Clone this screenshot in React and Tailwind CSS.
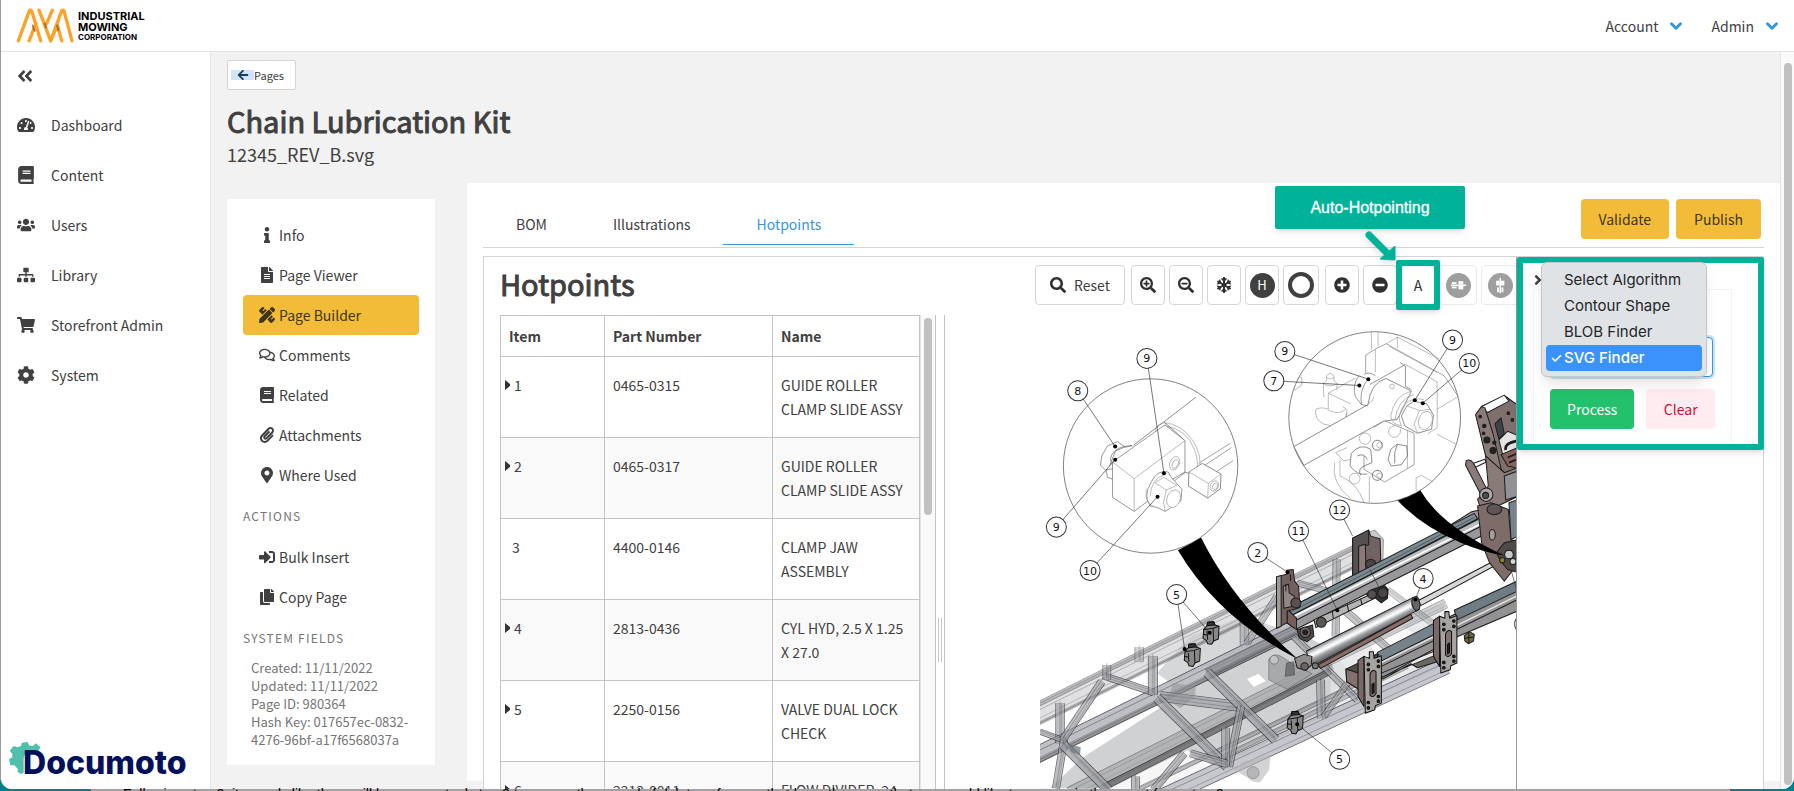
import React, { useState } from "react";
import {
  FaAngleDoubleLeft,
  FaAngleDoubleRight,
  FaArrowLeft,
  FaBook,
  FaCog,
  FaCopy,
  FaFileAlt,
  FaInfo,
  FaMapMarkerAlt,
  FaMinusCircle,
  FaPaperclip,
  FaPencilRuler,
  FaPlusCircle,
  FaRegComments,
  FaSearch,
  FaSearchMinus,
  FaSearchPlus,
  FaShoppingCart,
  FaSignInAlt,
  FaSitemap,
  FaSnowflake,
  FaTachometerAlt,
  FaUsers,
} from "react-icons/fa";
import { ChevronDown } from "lucide-react";

const navItems = [
  { label: "Dashboard", icon: FaTachometerAlt },
  { label: "Content", icon: FaBook },
  { label: "Users", icon: FaUsers },
  { label: "Library", icon: FaSitemap },
  { label: "Storefront Admin", icon: FaShoppingCart },
  { label: "System", icon: FaCog },
];

const pageLinks = [
  { label: "Info", icon: FaInfo },
  { label: "Page Viewer", icon: FaFileAlt },
  { label: "Page Builder", icon: FaPencilRuler, active: true },
  { label: "Comments", icon: FaRegComments },
  { label: "Related", icon: FaBook },
  { label: "Attachments", icon: FaPaperclip },
  { label: "Where Used", icon: FaMapMarkerAlt },
];

const actionLinks = [
  { label: "Bulk Insert", icon: FaSignInAlt },
  { label: "Copy Page", icon: FaCopy },
];

const parts = [
  { item: "1", number: "0465-0315", name: "GUIDE ROLLER CLAMP SLIDE ASSY", expandable: true },
  { item: "2", number: "0465-0317", name: "GUIDE ROLLER CLAMP SLIDE ASSY", expandable: true },
  { item: "3", number: "4400-0146", name: "CLAMP JAW ASSEMBLY", expandable: false },
  { item: "4", number: "2813-0436", name: "CYL HYD, 2.5 X 1.25 X 27.0", expandable: true },
  { item: "5", number: "2250-0156", name: "VALVE DUAL LOCK CHECK", expandable: true },
  { item: "6", number: "2212-0011", name: "FLOW DIVIDER, 24 GPM", expandable: true },
];

const algorithms = ["Select Algorithm", "Contour Shape", "BLOB Finder", "SVG Finder"];

const CompanyLogo = () => (
  <a href="#home" className="flex items-center gap-1 text-black">
    <svg viewBox="0 0 174 104" className="h-[35px] w-[58px]" fill="none" strokeWidth="10" strokeLinecap="round" strokeLinejoin="round">
      <g stroke="#fda32b">
        <path d="M7 98 L40 8 Q43 4 47 8 L74 98" />
        <path d="M39 98 L60 46" />
        <path d="M69 6 L104 98 L137 8 Q140 4 144 8 L168 98" />
        <path d="M109 6 L92 46" />
        <path d="M104 98 L124 50 L137 98" />
      </g>
      <g stroke="#8a5a1c" strokeWidth="6" opacity="0.7">
        <path d="M50 52 L56 68" />
        <path d="M86 46 L90 58" />
        <path d="M123 52 L127 66" />
      </g>
    </svg>
    <span className="flex flex-col font-['Inter',sans-serif] font-bold">
      <span className="text-[11px] leading-[11px]">INDUSTRIAL</span>
      <span className="text-[11px] leading-[11px]">MOWING</span>
      <span className="text-[8px] leading-[8px]">CORPORATION</span>
    </span>
  </a>
);

const DocumotoLogo = () => (
  <div className="absolute bottom-2 left-2 flex items-end">
    <svg viewBox="0 0 96 100" className="absolute -top-1 left-0 h-[34px] w-8">
      <path
        d="M38 4 L56 2 L60 12 L72 14 L80 6 L94 18 L88 30 L92 38 L48 38 L44 50 L44 94 L36 98 L26 92 L26 82 L16 72 L4 72 L0 54 L10 48 L10 38 L2 28 L14 14 L26 18 L36 14 Z"
        fill="#4fc1ab"
      />
    </svg>
    <span className="relative pl-[14px] font-['Inter',sans-serif] text-[32px] leading-9 font-extrabold text-[#03105a]">Documoto</span>
  </div>
);

const MenuLink = ({ label, icon: Icon, active }) => (
  <a
    href="#page"
    className={`flex h-10 items-center gap-1 rounded px-4 ${active ? "bg-[#f3bc38] text-[#3e3520]" : "text-[#404040]"}`}
  >
    <span className="flex w-4 justify-center">
      <Icon size={16} className="shrink-0" />
    </span>
    {label}
  </a>
);

const ToolButton = ({ label, wide, faded, children }) => (
  <button
    aria-label={label}
    className={`flex h-10 shrink-0 items-center justify-center rounded border border-[#d6d6d6] bg-white text-[#2f2f2f] ${wide ? "w-9" : faded ? "w-[38px]" : "w-[34px]"} ${faded ? "opacity-50" : ""}`}
  >
    {children}
  </button>
);

const Balloon = ({ x, y, n }) => (
  <g>
    <circle cx={x} cy={y} r="30" fill="#fff" stroke="#333" strokeWidth="3" />
    <text x={x} y={y + 12} textAnchor="middle" fontSize="33" fill="#111" fontFamily="'DejaVu Sans', sans-serif">
      {n}
    </text>
  </g>
);

const Leader = ({ from, to, dot = true }) => (
  <g>
    <line x1={from[0]} y1={from[1]} x2={to[0]} y2={to[1]} stroke="#333" strokeWidth="2" />
    {dot && <circle cx={to[0]} cy={to[1]} r="6" fill="#000" />}
  </g>
);

// A square tube: dark outline with a lighter core and two inner edge lines
const Tube = ({ a, b, w, fill = "#a3a4aa", opacity = 0.6 }) => (
  <g opacity={opacity}>
    <line x1={a[0]} y1={a[1]} x2={b[0]} y2={b[1]} stroke="#222224" strokeWidth={w} />
    <line x1={a[0]} y1={a[1]} x2={b[0]} y2={b[1]} stroke={fill} strokeWidth={w - 4} />
    <line x1={a[0]} y1={a[1] - w / 5} x2={b[0]} y2={b[1] - w / 5} stroke="#4c4c50" strokeWidth="2" />
    <line x1={a[0] + w / 6} y1={a[1] + w / 6} x2={b[0] + w / 6} y2={b[1] + w / 6} stroke="#66666a" strokeWidth="2" />
  </g>
);

const Valve = ({ x, y }) => (
  <g transform={`translate(${x} ${y})`} stroke="#111" strokeWidth="3" strokeLinejoin="round">
    <path d="M-22 -10 L-12 -22 L-10 -32 L8 -34 L12 -24 L24 -20 L22 18 L8 24 L2 34 L-10 32 L-14 22 L-24 16 Z" fill="#888" />
    <path d="M-22 -10 L6 -14 L8 24 M6 -14 L24 -20 M-24 4 L-12 6 M-12 -6 L-10 20" fill="none" />
    <path d="M-10 -32 L8 -34 L12 -24 L-12 -22 Z" fill="#333" />
  </g>
);

const Bracket = ({ x, y }) => (
  <g transform={`translate(${x} ${y})`} stroke="#111" strokeWidth="3" strokeLinejoin="round">
    <path d="M-18 12 L0 0 L0 150 L-18 120 Z" fill="#786866" />
    <path d="M0 0 L16 6 L16 -14 L28 -14 L30 6 L52 -2 L52 140 L34 148 L32 160 L4 170 Z" fill="#a7a3a1" />
    <path d="M18 52 Q26 36 36 46 L36 112 Q26 126 18 116 Z" fill="#817472" />
    <path d="M24 84 L30 80 L30 108 L24 112 Z" fill="#222" />
    <g fill="#222">
      <circle cx="13" cy="24" r="4" />
      <circle cx="43" cy="14" r="4" />
      <circle cx="13" cy="40" r="4" />
      <circle cx="43" cy="30" r="4" />
      <circle cx="13" cy="138" r="4" />
      <circle cx="43" cy="120" r="4" />
      <circle cx="13" cy="154" r="4" />
      <circle cx="43" cy="134" r="4" />
    </g>
  </g>
);

const LeftDetail = () => (
  <g fill="none" stroke="#9a9a9a" strokeWidth="2" strokeLinejoin="round">
    <circle cx="361" cy="470" r="261" fill="#fff" stroke="#444" />
    <path d="M310 408 L497 264" stroke="#555" />
    <path d="M505 462 L600 402 M520 470 L603 415 M560 486 L608 454" stroke="#777" />
    <path d="M375 370 Q374 345 402 340 Q455 345 488 395 Q518 440 506 490 L478 492" />
    <path d="M405 350 Q470 360 492 420 Q508 460 497 492" />
    <path d="M402 340 Q420 352 464 395" stroke="#555" />
    {/* rear nut */}
    <path d="M262 397 L232 410 L215 440 L211 468 L226 482 L250 478 M262 397 L286 414 L306 408 M286 412 L256 425 L238 470" stroke="#666" />
    <path d="M228 482 L232 504 L248 510 M250 470 Q230 450 254 425 Q275 408 306 410" stroke="#666" />
    {/* block */}
    <path d="M247 458 L404 347 L464 394 L464 490 L312 606 L247 564 Z" fill="#fff" stroke="#666" />
    <path d="M247 458 L312 508 L464 394 M312 508 L312 606" />
    <ellipse cx="433" cy="462" rx="14" ry="21" transform="rotate(25 433 462)" />
    <ellipse cx="435" cy="464" rx="8" ry="14" transform="rotate(25 435 464)" />
    {/* front nut */}
    <path d="M362 520 Q380 480 414 488 L420 500 L455 540 L452 574 L405 606 L380 594 L360 590 Q338 560 362 520 Z" fill="#fff" stroke="#666" />
    <path d="M360 560 Q362 510 402 496 M374 520 L400 504 L440 528 L408 542 L374 520 M408 542 L400 578 L405 606 M348 540 Q344 580 368 590" />
    <ellipse cx="430" cy="568" rx="20" ry="27" transform="rotate(20 430 568)" fill="#fff" />
    <path d="M426 510 L464 488 L476 492" stroke="#666" />
    {/* fitting */}
    <path d="M516 462 L572 494 L570 538 L532 566 L474 530 L476 488 Z" fill="#fff" stroke="#555" />
    <path d="M476 488 L534 522 L572 494 M534 522 L532 566" />
    <ellipse cx="552" cy="530" rx="12" ry="16" transform="rotate(20 552 530)" />
    <ellipse cx="554" cy="531" rx="7" ry="10" transform="rotate(20 554 531)" />
  </g>
);

const RightDetail = () => (
  <g fill="none" stroke="#9a9a9a" strokeWidth="2" strokeLinejoin="round">
    <circle cx="1032" cy="325" r="257" fill="#fff" stroke="#444" />
    <path d="M1022 68 V122 M1042 68 V112 M1100 84 L1100 118 M1100 84 L1066 104 M1100 84 L1226 150" />
    {/* plates */}
    <path d="M1005 192 V138 L1034 120 L1066 104 L1240 200 L1282 262" stroke="#777" />
    <path d="M1034 120 V190 M1124 166 L1219 218 V356 L1190 374 M1219 300 L1282 262 M1219 375 L1276 405 M1076 112 L1219 190" />
    <path d="M1124 166 L1018 226 M1108 160 L1124 172 V232 L1140 240" stroke="#666" />
    {/* spigot */}
    <path d="M880 264 L878 224 L888 214 L888 200 Q898 186 910 200 L910 214 L920 224 L918 242 M878 224 Q898 236 920 224 M888 206 Q900 212 910 206" />
    <path d="M893 300 V252 L975 206 M893 252 L960 284 M800 210 Q820 190 812 230 L790 244" />
    <path d="M856 300 Q850 330 880 345 L905 350 M856 300 Q880 290 900 305 Q925 318 945 300 M905 350 Q950 345 948 310 M936 292 Q956 300 946 322" />
    {/* manifold */}
    <path d="M1030 355 L1060 334 L1150 372 V466 L1062 518 L1000 480 V440" stroke="#777" />
    <path d="M1130 364 V476 M1092 350 Q1070 352 1074 372 Q1084 390 1100 382 Q1112 372 1110 358" />
    <path d="M1100 405 L1128 410 L1130 440 L1112 466 L1082 470 L1072 452 L1080 420 Z M1100 405 L1092 430 L1092 462" stroke="#555" />
    <circle cx="1040" cy="408" r="15" stroke="#444" />
    <circle cx="1046" cy="408" r="8" />
    <circle cx="1040" cy="498" r="15" stroke="#444" />
    <circle cx="1046" cy="499" r="8" />
    <circle cx="1003" cy="388" r="17" />
    <path d="M962 432 Q990 400 1020 420 L1024 460 L1000 470 Q980 480 990 498 M962 432 L958 470 Q980 500 1010 494 M980 440 Q1000 430 1010 450" stroke="#555" />
    <circle cx="972" cy="508" r="16" />
    <path d="M950 415 L915 430 L940 455 L960 450 M928 450 V500 Q980 520 1000 580 M912 460 Q900 520 960 568 M1016 500 V578 M1156 545 V505 L1172 498 L1206 518" />
    {/* link arm */}
    <path d="M790 412 L1012 286 Q1020 220 1066 208 L1142 246 L1100 330 L1058 336 L820 468 Z" fill="#fff" stroke="#555" />
    <path d="M1012 286 Q1028 276 1030 262" />
    <circle cx="1084" cy="232" r="7" />
    <path d="M985 200 Q964 226 974 262 L992 286 Q986 240 1012 210 M1000 196 Q1016 186 1034 200 M992 286 L1012 290" stroke="#666" />
    {/* front nut */}
    <path d="M1142 246 Q1090 258 1080 320 Q1082 345 1112 350 M1150 256 Q1100 270 1092 335" />
    <path d="M1128 290 L1150 276 L1188 284 L1208 318 L1202 360 L1160 372 L1122 350 L1112 320 Z" fill="#fff" stroke="#555" />
    <path d="M1128 290 L1166 304 L1150 345 L1160 372 M1166 304 L1198 300 M1112 350 Q1096 320 1122 284 Q1150 262 1180 272" />
    <ellipse cx="1184" cy="334" rx="20" ry="28" transform="rotate(18 1184 334)" fill="#fff" />
  </g>
);

// Semi-transparent truss behind the coloured parts
const Frame = () => (
  <g strokeLinejoin="round">
    <path d="M30 745 L100 690 L520 420 L780 262 L900 330 L960 400 L900 520 L420 745 Z" fill="#cbccce" opacity="0.9" />
    <path d="M900 330 L1240 190 L1240 380 L900 530 Z" fill="#e4e5e7" opacity="0.8" />
    <path d="M1000 300 L1100 250 L1160 290 L1050 350 Z" fill="#fff" opacity="0.7" />
    <path d="M30 680 L330 520 L376 486 L150 660 L60 745 L30 745 Z" fill="#fff" />
    <path d="M240 745 L470 630 L570 690 L430 745 Z" fill="#fff" opacity="0.8" />
    <path d="M380 400 L480 290 L640 230 L760 270 L420 430 Z" fill="#d6d7d9" />
    <Tube a={[10, 530]} b={[1010, 34]} w={56} fill="#cbccd0" opacity={0.6} />
    <Tube a={[10, 500]} b={[1010, 4]} w={16} opacity={0.5} />
    <Tube a={[10, 560]} b={[1010, 64]} w={10} fill="#8e8f93" opacity={0.4} />
    <Tube a={[10, 650]} b={[800, 262]} w={50} fill="#b4b5bd" opacity={0.85} />
    <Tube a={[10, 672]} b={[800, 284]} w={12} fill="#7a7b80" opacity={0.55} />
    <Tube a={[530, 402]} b={[800, 268]} w={28} fill="#77787b" opacity={0.5} />
    <Tube a={[120, 760]} b={[900, 370]} w={40} fill="#96979a" opacity={0.5} />
    <Tube a={[215, 745]} b={[900, 394]} w={20} fill="#67686b" opacity={0.8} />
    <Tube a={[400, 770]} b={[1246, 378]} w={52} fill="#b9bac2" opacity={0.8} />
    <Tube a={[330, 745]} b={[1130, 360]} w={14} opacity={0.6} />
    <Tube a={[560, 660]} b={[1130, 380]} w={14} opacity={0.5} />
    <Tube a={[1245, 192]} b={[880, 370]} w={30} opacity={0.45} />
    <Tube a={[90, 490]} b={[90, 610]} w={28} opacity={0.7} />
    <Tube a={[30, 575]} b={[110, 605]} w={18} opacity={0.7} />
    <Tube a={[102, 600]} b={[78, 745]} w={24} opacity={0.7} />
    <Tube a={[98, 600]} b={[215, 425]} w={24} opacity={0.7} />
    <Tube a={[100, 615]} b={[235, 750]} w={30} opacity={0.8} />
    <Tube a={[220, 408]} b={[370, 458]} w={22} opacity={0.7} />
    <Tube a={[230, 376]} b={[230, 420]} w={26} />
    <Tube a={[368, 350]} b={[368, 465]} w={30} opacity={0.7} />
    <Tube a={[327, 322]} b={[327, 366]} w={28} opacity={0.5} />
    <Tube a={[390, 470]} b={[630, 500]} w={32} opacity={0.75} />
    <Tube a={[380, 474]} b={[590, 680]} w={30} opacity={0.8} />
    <Tube a={[530, 398]} b={[735, 600]} w={30} opacity={0.8} />
    <Tube a={[632, 500]} b={[596, 680]} w={24} opacity={0.75} />
    <Tube a={[586, 565]} b={[586, 680]} w={26} opacity={0.7} />
    <Tube a={[480, 640]} b={[590, 672]} w={24} opacity={0.7} />
    <Tube a={[462, 640]} b={[370, 750]} w={24} opacity={0.7} />
    <Tube a={[316, 710]} b={[316, 750]} w={26} opacity={0.7} />
    <Tube a={[642, 235]} b={[642, 315]} w={28} opacity={0.6} />
    <Tube a={[740, 170]} b={[650, 310]} w={22} opacity={0.6} />
    <Tube a={[918, 60]} b={[915, 290]} w={24} opacity={0.6} />
    <Tube a={[800, 130]} b={[950, 170]} w={20} opacity={0.6} />
    <Tube a={[940, 210]} b={[1110, 360]} w={24} opacity={0.6} />
    <Tube a={[1070, 150]} b={[1230, 270]} w={20} opacity={0.4} />
    <Tube a={[790, 290]} b={[980, 480]} w={22} opacity={0.7} />
    <Tube a={[870, 420]} b={[872, 535]} w={26} opacity={0.7} />
    <Tube a={[950, 430]} b={[880, 530]} w={20} opacity={0.6} />
    <path d="M715 400 V358 Q732 338 752 350 L790 375 L845 402 L770 448 L715 420 Z" fill="#9fa0a2" stroke="#555" strokeWidth="2" opacity="0.8" />
    <circle cx="731" cy="360" r="13" fill="#c3c4c6" stroke="#666" strokeWidth="2" />
    <path d="M768 370 L790 366 L792 405 L764 410 Z" fill="#6a6b6d" stroke="#444" strokeWidth="2" opacity="0.85" />
    <path d="M610 690 L640 665 L720 645 L716 690 L690 725 Q670 732 650 712 Z" fill="#b5b6b9" opacity="0.6" />
    <circle cx="668" cy="698" r="18" fill="#a9aaad" stroke="#666" strokeWidth="2" opacity="0.7" />
    <path d="M430 430 L496 440 L494 470 L450 505 L410 480 Z" fill="#8c8d90" opacity="0.5" />
    <path d="M112 610 L152 622 L150 646 L124 636 Z" fill="#67757b" opacity="0.7" />
    <path d="M650 418 L684 402 L706 424 L670 442 Z" fill="#fff" />
  </g>
);

const Assembly = () => (
  <g stroke="#1c1c1c" strokeWidth="3" strokeLinejoin="round">
    {/* rear bracket */}
    <path d="M1010 -20 L1032 -28 L1058 0 L1056 80 L1010 90 Z" fill="#c9cacc" stroke="#999" />
    <path d="M966 -4 L1014 -28 L1020 -10 L1048 -2 L1050 60 L1034 96 L966 120 Z" fill="#716361" />
    <path d="M966 -4 L1014 -28 L1014 16 L984 22 L984 112 L966 120 Z" fill="#555052" />
    <path d="M984 20 L1004 14 L1006 100 L984 110 Z" fill="#8b7a77" />
    <circle cx="1020" cy="74" r="15" fill="#4a4546" />
    {/* upper slide rail */}
    <path d="M770 208 L1190 0 L1320 -82 L1360 -92 L1390 -70 L1390 -30 L798 268 L770 250 Z" fill="#98989a" />
    <path d="M770 208 L1330 -78 L1340 -62 L786 226 Z" fill="#7c8a92" />
    <path d="M786 226 L1345 -62 L1385 -80 L1390 -60 L796 242 Z" fill="#b8bcc0" />
    <path d="M786 232 L1388 -66" stroke="#fff" strokeWidth="5" />
    <path d="M774 220 L1330 -66" stroke="#3b4348" strokeWidth="2" />
    <path d="M770 208 L798 236 L798 270 L770 250 Z" fill="#765f5b" />
    {/* roller strip */}
    <path d="M850 240 L1030 160 L1032 176 L856 264 Z" fill="#b6b4b3" />
    <path d="M905 214 L908 236 M950 196 L954 216 M990 178 L994 196" />
    <path d="M1008 166 L1024 150 L1062 138 L1072 150 L1070 176 L1052 190 L1032 174 Z" fill="#333" />
    <circle cx="1024" cy="164" r="13" fill="#55504f" />
    <circle cx="1056" cy="160" r="15" fill="#4b4544" />
    <path d="M800 270 L846 256 L850 290 L830 306 L806 296 Z" fill="#4f4a4a" />
    <circle cx="872" cy="248" r="15" fill="#5a5453" />
    <circle cx="824" cy="278" r="16" fill="#6b6463" />
    <circle cx="824" cy="278" r="7" fill="#222" />
    {/* front left bracket */}
    <path d="M738 112 L768 104 L768 92 L788 90 L792 124 L804 140 L808 204 L770 214 L770 248 L738 266 Z" fill="#71605d" />
    <path d="M738 112 L752 108 L752 260 L738 266 Z" fill="#a09a98" />
    <path d="M758 140 L774 134 L776 160 L792 170 L788 200 L760 206 Z" fill="#918683" />
    <circle cx="796" cy="190" r="15" fill="#5b504e" />
    <path d="M766 134 V156 M780 104 V124" />
    {/* hydraulic cylinder */}
    <path d="M862 376 L1140 224 L1146 236 L870 386 Z" fill="#8a6c66" />
    <path d="M828 334 L1146 174 Q1168 182 1164 210 L850 378 Q832 362 828 334 Z" fill="url(#steel)" />
    <path d="M1146 174 Q1136 196 1156 214 L1166 208 Q1172 186 1158 170 Z" fill="#666" />
    <path d="M1164 182 L1420 48 L1426 60 L1170 198 Z" fill="#d4d6d8" />
    <path d="M792 356 L820 344 L844 350 L842 376 L826 392 L800 384 Z" fill="#8f8b8a" />
    <circle cx="822" cy="380" r="11" fill="#6a6463" />
    <circle cx="854" cy="378" r="9" fill="#777" />
    {/* lower slide rail */}
    <path d="M1040 345 L1220 250 L1462 127 L1462 213 L1270 295 L1052 415 Z" fill="#929294" />
    <path d="M1270 212 L1462 123 L1462 153 L1280 240 Z" fill="#6f7c83" />
    <path d="M1040 338 L1220 246 L1220 280 L1052 364 Z" fill="#76838b" />
    <path d="M1052 368 L1462 167" stroke="#ddd" strokeWidth="5" />
    <path d="M1052 380 L1462 179 M1052 400 L1220 330" />
    <path d="M1052 412 L1220 344 L1220 366 L1160 384 L1140 372 L1056 418 Z" fill="#6b6765" />
    <path d="M946 388 L1040 342 L1042 380 L996 410 L996 450 L948 426 Z" fill="#4f4b4b" />
    <path d="M946 388 L996 404 L996 456 L948 426 Z" fill="#86706c" />
    <Bracket x={1000} y={350} />
    <Bracket x={1226} y={230} />
    <path d="M1300 288 L1316 276 L1330 284 L1328 304 L1312 312 L1302 304 Z" fill="#6d6641" />
    <path d="M1300 296 L1328 292 M1314 278 V310" />
  </g>
);

// Head of the clamp at the right edge of the drawing
const ClampHead = () => (
  <g stroke="#1c1c1c" strokeWidth="3" strokeLinejoin="round">
    <path d="M1336 316 L1352 292 L1424 262 L1463 290 L1463 480 L1420 490 L1366 440 Z" fill="#7f706d" />
    <path d="M1352 292 L1420 258 L1434 276 L1370 310 Z" fill="#fff" />
    <path d="M1334 316 L1352 292 L1362 296 L1386 372 L1412 486 L1364 440 Z" fill="#8b7b78" />
    <path d="M1392 344 L1410 326 L1420 372 L1404 390 Z" fill="#3c4246" />
    <path d="M1404 392 L1430 366 L1463 380 L1463 430 L1416 440 Z" fill="#e3e3e4" />
    <path d="M1424 422 Q1420 400 1463 394" fill="none" strokeWidth="8" />
    <path d="M1410 436 L1463 414 L1463 478 L1430 470 Z" fill="#84625a" />
    <path d="M1430 445 L1463 430 M1434 460 L1463 448" strokeWidth="5" />
    <g fill="#222">
      <circle cx="1348" cy="322" r="4" />
      <circle cx="1360" cy="350" r="5" />
      <circle cx="1368" cy="392" r="9" />
      <circle cx="1386" cy="424" r="9" />
      <circle cx="1358" cy="372" r="4" />
      <circle cx="1390" cy="400" r="5" />
      <circle cx="1432" cy="312" r="4" />
      <circle cx="1444" cy="332" r="4" />
    </g>
    <path d="M1306 454 Q1318 448 1328 462 L1368 540 L1352 560 L1304 468 Z" fill="#8b7b78" />
    <path d="M1328 462 L1362 450 L1366 458 L1334 474 Z" fill="#fff" />
    <path d="M1364 440 L1420 490 L1463 474 L1463 560 L1400 590 L1350 600 L1340 570 L1372 530 Z" fill="#8b7b78" />
    <path d="M1420 500 L1463 484 V560 L1424 572 Z" fill="#909295" />
    <circle cx="1366" cy="556" r="20" fill="#a9a9aa" />
    <circle cx="1364" cy="558" r="9" fill="#55504f" />
    <path d="M1340 590 L1380 580 L1432 600 L1440 690 L1463 700 L1463 760 L1420 815 L1376 760 L1352 700 Z" fill="#7e6c69" />
    <path d="M1434 580 L1463 570 V680 L1440 690 Z" fill="#76838b" />
    <ellipse cx="1390" cy="600" rx="22" ry="16" fill="#5e5654" />
    <ellipse cx="1384" cy="676" rx="9" ry="16" fill="#a49d9b" />
    <path d="M1396 730 L1420 700 L1463 690 V790 L1430 780 L1410 756 Z" fill="#4f4948" />
    <circle cx="1434" cy="735" r="13" fill="#c8c8c8" />
    <circle cx="1414" cy="752" r="8" fill="#8c7f2d" />
    <circle cx="1446" cy="756" r="9" fill="#d5d5d5" />
  </g>
);

const Illustration = () => (
  <svg viewBox="-258 18 1713 1419" preserveAspectRatio="xMaxYMin slice" className="h-full w-full" role="img" aria-label="Chain lubrication kit drawing">
    <defs>
      <linearGradient id="steel" gradientUnits="userSpaceOnUse" x1="986" y1="254" x2="1006" y2="294">
        <stop offset="0" stopColor="#7c8084" />
        <stop offset="0.3" stopColor="#e8e9ea" />
        <stop offset="0.45" stopColor="#ffffff" />
        <stop offset="0.7" stopColor="#9b9da0" />
        <stop offset="1" stopColor="#66686b" />
      </linearGradient>
      <clipPath id="sheet">
        <rect x="30" y="0" width="1432" height="1440" />
      </clipPath>
    </defs>
    <g clipPath="url(#sheet)">
      <g transform="translate(0 690)">
        <Frame />
        <Assembly />
      </g>
      <ClampHead />
      <path d="M443 722 L512 684 Q610 880 800 1046 L790 1042 Q560 920 443 722 Z" fill="#000" />
      <path d="M1098 570 L1168 542 Q1230 650 1420 738 Q1360 730 1290 700 Q1170 650 1098 570 Z" fill="#000" />
      <LeftDetail />
      <RightDetail />
      <g transform="translate(0 690)">
        <Valve x={542} y={280} />
        <Valve x={486} y={346} />
        <Valve x={794} y={548} />
      </g>
      <Leader from={[350, 148]} to={[401, 492]} />
      <Leader from={[143, 245]} to={[255, 412]} />
      <Leader from={[79, 653]} to={[255, 451]} />
      <Leader from={[180, 783]} to={[382, 562]} />
      <Leader from={[763, 127]} to={[1013, 210]} />
      <Leader from={[730, 215]} to={[986, 229]} />
      <Leader from={[1265, 93]} to={[1152, 273]} />
      <Leader from={[1315, 163]} to={[1176, 282]} />
      <Leader from={[926, 602]} to={[966, 680]} dot={false} />
      <Leader from={[1018, 780]} to={[1045, 834]} dot={false} />
      <Leader from={[804, 665]} to={[920, 902]} />
      <Leader from={[682, 729]} to={[771, 788]} />
      <Leader from={[1177, 807]} to={[1154, 870]} />
      <Leader from={[439, 855]} to={[538, 969]} />
      <Leader from={[439, 855]} to={[463, 1018]} />
      <Leader from={[927, 1348]} to={[800, 1243]} />
      <Leader from={[1440, 780]} to={[1459, 850]} dot={false} />
      <Balloon x={350} y={148} n="9" />
      <Balloon x={143} y={245} n="8" />
      <Balloon x={79} y={653} n="9" />
      <Balloon x={180} y={783} n="10" />
      <Balloon x={763} y={127} n="9" />
      <Balloon x={730} y={215} n="7" />
      <Balloon x={1265} y={93} n="9" />
      <Balloon x={1315} y={163} n="10" />
      <Balloon x={927} y={602} n="12" />
      <Balloon x={804} y={665} n="11" />
      <Balloon x={682} y={729} n="2" />
      <Balloon x={1177} y={807} n="4" />
      <Balloon x={439} y={855} n="5" />
      <Balloon x={927} y={1348} n="5" />
      <circle cx="1481" cy="943" r="30" fill="#fff" stroke="#333" strokeWidth="3" />
    </g>
  </svg>
);

const AlignIcon = ({ vertical }) => (
  <svg viewBox="0 0 26 26" className="h-[25px] w-[25px]">
    <circle cx="13" cy="13" r="13" fill="#404040" />
    <g fill="#fff" transform={vertical ? "rotate(-90 13 13)" : undefined}>
      <rect x="5" y="12" width="16" height="1.5" />
      <rect x="6" y="9.5" width="5" height="2" />
      <rect x="6" y="14" width="5" height="2" />
      <rect x="13" y="8.5" width="5" height="3.5" />
      <rect x="13" y="13.5" width="5" height="3.5" />
    </g>
  </svg>
);

const Toolbar = () => (
  <div className="-mr-[3px] flex gap-1">
    <button className="mr-[2px] flex h-10 w-[90px] shrink-0 items-center justify-center gap-2 rounded border border-[#d6d6d6] bg-white text-[#404040]">
      <FaSearch size={16} className="text-[#2f2f2f]" />
      Reset
    </button>
    <ToolButton label="Zoom in">
      <FaSearchPlus size={16} />
    </ToolButton>
    <ToolButton label="Zoom out">
      <FaSearchMinus size={16} />
    </ToolButton>
    <ToolButton label="Freeze">
      <FaSnowflake size={16} />
    </ToolButton>
    <ToolButton label="Highlight">
      <span className="flex h-[25px] w-[25px] shrink-0 items-center justify-center rounded-full bg-[#404040] text-[13px] text-white">H</span>
    </ToolButton>
    <div className="mr-[2px]">
      <ToolButton label="Circle" wide>
        <span className="h-[26px] w-[26px] shrink-0 rounded-full border-4 border-[#404040]"></span>
      </ToolButton>
    </div>
    <ToolButton label="Add">
      <FaPlusCircle size={16} />
    </ToolButton>
    <ToolButton label="Remove">
      <FaMinusCircle size={16} />
    </ToolButton>
    <div className="relative">
      <ToolButton label="Auto-hotpoint">A</ToolButton>
      <div className="pointer-events-none absolute -inset-x-[5px] -inset-y-[5px] z-10 rounded-xs border-6 border-[#00b398] shadow-md"></div>
      <div className="absolute -top-[79px] -left-[126px] z-20 flex h-[43px] w-[190px] items-center justify-center rounded-xs bg-[#00b398] font-['Liberation_Sans',Arial,sans-serif] text-base text-white shadow-md [-webkit-text-stroke:0.3px_white]">
        Auto-Hotpointing
      </div>
      <svg viewBox="0 0 32 32" className="absolute -top-[36px] -left-[36px] z-20 h-8 w-8 drop-shadow-md">
        <path d="M4 6 L23 25" stroke="#00b398" strokeWidth="7" strokeLinecap="round" />
        <path d="M30 31 L15 30 L30 17 Z" fill="#00b398" stroke="#00b398" strokeLinejoin="round" />
      </svg>
    </div>
    <ToolButton label="Align horizontal" faded>
      <AlignIcon />
    </ToolButton>
    <ToolButton label="Align vertical" faded>
      <AlignIcon vertical />
    </ToolButton>
  </div>
);

const PartsTable = () => (
  <div className="flex w-[435px] shrink-0 overflow-hidden">
    <div className="flex-1 overflow-hidden">
      <table className="w-full table-fixed border-collapse text-left">
        <thead>
          <tr className="h-[41px]">
            <th className="w-[104px] border border-[#c4c4c4] px-2 font-bold">Item</th>
            <th className="w-[168px] border border-[#c4c4c4] px-2 font-bold">Part Number</th>
            <th className="border border-[#c4c4c4] px-2 font-bold">Name</th>
          </tr>
        </thead>
        <tbody>
          {parts.map((part) => (
            <tr key={part.item} className="h-[81px] align-top even:bg-[#f9f9f9]">
              <td className="border border-[#c4c4c4] px-1 pt-4">
                <div className="flex items-center gap-1">
                  {part.expandable ? (
                    <svg viewBox="0 0 5 10" className="h-[10px] w-[5px] fill-[#333]">
                      <path d="M0 0 L5 4 V6 L0 10 Z" />
                    </svg>
                  ) : (
                    <span className="w-[3px]"></span>
                  )}
                  {part.item}
                </div>
              </td>
              <td className="border border-[#c4c4c4] px-2 pt-4">{part.number}</td>
              <td className="border border-[#c4c4c4] px-2 pt-4">{part.name}</td>
            </tr>
          ))}
        </tbody>
      </table>
    </div>
    <div className="w-[15px] border-l border-[#e5e5e5] bg-[#fafafa] pt-[3px] pl-[3px]">
      <div className="h-[197px] w-2 rounded-full bg-[#c1c1c1]"></div>
    </div>
  </div>
);

const AlgorithmPanel = () => {
  const [algorithm, setAlgorithm] = useState("SVG Finder");

  return (
    <aside className="relative z-10 w-[247px] shrink-0 border-l border-[#999] bg-white">
      <div className="-mr-px h-[193px] rounded-xs border-6 border-[#00b398] px-[10px] pt-2 shadow-md">
        <button aria-label="Collapse panel" className="flex h-[18px] items-center text-[#404040]">
          <FaAngleDoubleRight size={16} />
        </button>
        <div className="relative h-[153px] w-[199px] border-x border-t border-[#f3f3f3] px-4 pt-[47px]">
          <label htmlFor="algorithm" className="sr-only">
            Algorithm
          </label>
          <select
            id="algorithm"
            value={algorithm}
            onChange={(e) => setAlgorithm(e.target.value)}
            className="h-10 w-[163px] appearance-none rounded border border-[#3298dc] bg-white px-3 ring-2 ring-[#3298dc]/25"
          >
            {algorithms.map((name) => (
              <option key={name}>{name}</option>
            ))}
          </select>
          <div className="mt-3 flex gap-3">
            <button className="h-10 w-[85px] rounded bg-[#23c16b] text-white">Process</button>
            <button className="h-10 w-[69px] rounded bg-[#feecf0] text-[#cc0f35]">Clear</button>
          </div>
          <ul className="absolute -top-[28px] left-[7px] w-[166px] rounded-md border border-[#c3c7c9] bg-[#dfe3e5] p-1 pb-[5px] font-['Inter',sans-serif] text-[15px] leading-[26px] text-[#242627] shadow-lg">
            {algorithms.map((name) => (
              <li
                key={name}
                onClick={() => setAlgorithm(name)}
                className={`flex rounded whitespace-nowrap ${name === algorithm ? "bg-[#3a92fb] font-medium text-white" : ""}`}
              >
                <span className="w-[18px] shrink-0 pl-1 text-sm leading-[26px]">{name === algorithm ? "✓" : ""}</span>
                {name}
              </li>
            ))}
          </ul>
        </div>
      </div>
    </aside>
  );
};

const App = () => {
  return (
    <div className="relative flex h-screen flex-col overflow-hidden bg-[#a3a1a3] pb-[2px] font-['Noto_Sans_CJK_SC',sans-serif] text-sm leading-6 text-[#404040]">
      {/* Desktop showing at the window's lower corners */}
      <div className="absolute bottom-0 left-0 h-10 w-[91px] bg-[#00808a]"></div>
      <div className="absolute right-0 bottom-0 h-10 w-[64px] bg-[#00808a]"></div>

      <div className="relative flex min-h-0 flex-1 flex-col overflow-hidden rounded-b-xl border-l border-[#999] bg-white">
        <header className="flex h-[52px] shrink-0 items-center justify-between border-b border-[#e4e4e4] pr-[13px] pl-[15px]">
          <CompanyLogo />
          <nav className="flex gap-[26px]">
            <button className="flex items-center gap-[9px]">
              Account
              <ChevronDown size={18} strokeWidth={4} className="text-[#3298dc]" />
            </button>
            <button className="flex items-center gap-[9px]">
              Admin
              <ChevronDown size={18} strokeWidth={4} className="text-[#3298dc]" />
            </button>
          </nav>
        </header>

        <div className="flex min-h-0 flex-1">
          {/* Left Navigation */}
          <div className="relative w-[210px] shrink-0 border-r border-[#e4e4e4] bg-white">
            <button aria-label="Collapse menu" className="flex h-12 items-center pl-[15px]">
              <FaAngleDoubleLeft size={18} />
            </button>
            <nav>
              {navItems.map(({ label, icon: Icon }) => (
                <a key={label} href="#nav" className="flex h-[50px] items-center pl-4">
                  <span className="flex w-[34px] items-center">
                    <Icon size={18} />
                  </span>
                  {label}
                </a>
              ))}
            </nav>
            <DocumotoLogo />
          </div>

          {/* Page */}
          <main className="flex min-w-0 flex-1 flex-col bg-[#f2f2f2] pt-2 pl-4">
            <button className="flex h-[30px] w-[69px] shrink-0 items-center rounded-xs border border-[#d4d4d4] bg-white pl-[3px] text-[11px]">
              <span className="flex h-[10px] w-[23px] items-center justify-center bg-[#cfe4fd] text-[#1f3c5c]">
                <FaArrowLeft size={12} />
              </span>
              Pages
            </button>
            <h1 className="mt-[10px] text-[29px] leading-10 [-webkit-text-stroke:1px]">Chain Lubrication Kit</h1>
            <p className="mt-[3px] mb-[17px] text-lg leading-[23px]">12345_REV_B.svg</p>

            <div className="flex min-h-0 flex-1 items-start">
              <div className="mt-4 w-[208px] shrink-0 bg-white p-4">
                {pageLinks.map((link) => (
                  <MenuLink key={link.label} {...link} />
                ))}
                <h2 className="text-xs leading-[42px] tracking-widest text-[#757575]">ACTIONS</h2>
                {actionLinks.map((link) => (
                  <MenuLink key={link.label} {...link} />
                ))}
                <h2 className="text-xs leading-[42px] tracking-widest text-[#757575]">SYSTEM FIELDS</h2>
                <div className="px-2 text-[13px] leading-[18px] text-[#757575]">
                  <p>Created: 11/11/2022</p>
                  <p>Updated: 11/11/2022</p>
                  <p>Page ID: 980364</p>
                  <p>Hash Key: 017657ec-0832-4276-96bf-a17f6568037a</p>
                </div>
              </div>

              <div className="mb-2 ml-8 flex min-w-0 flex-1 flex-col self-stretch bg-white px-4 pt-4">
                {/* Tabs */}
                <div className="flex h-[49px] shrink-0 justify-between border-b border-[#d4d4d4]">
                  <div className="flex h-[46px] pt-1">
                    <button className="px-[33px]">BOM</button>
                    <button className="px-[33px]">Illustrations</button>
                    <button className="border-b border-[#3298dc] px-[33px] text-[#3298dc]">Hotpoints</button>
                  </div>
                  <div className="flex gap-[7px] pr-[3px]">
                    <button className="h-10 rounded bg-[#f3bc38] px-[18px] text-[#3e3520]">Validate</button>
                    <button className="h-10 rounded bg-[#f3bc38] px-[18px] text-[#3e3520]">Publish</button>
                  </div>
                </div>

                {/* Tab Content */}
                <div className="mt-2 -mb-2 flex min-h-0 flex-1 border-x border-t border-[#d4d4d4] bg-white">
                  <div className="flex min-w-0 flex-1 flex-col pl-4">
                    <div className="flex h-[58px] shrink-0 items-start justify-between pt-2">
                      <h2 className="text-[29px] leading-9 [-webkit-text-stroke:1px]">Hotpoints</h2>
                      <Toolbar />
                    </div>
                    <div className="flex min-h-0 flex-1">
                      <PartsTable />
                      <div className="flex w-[10px] shrink-0 items-center justify-center border-x border-[#c4c4c4]">
                        <div className="mt-44 h-11 w-1 border-x border-[#c4c4c4]"></div>
                      </div>
                      <div className="min-w-0 flex-1 overflow-hidden">
                        <Illustration />
                      </div>
                    </div>
                  </div>
                  <AlgorithmPanel />
                </div>
              </div>
            </div>
          </main>

          {/* Page scrollbar */}
          <div className="w-[14px] shrink-0 border-l border-[#e4e4e4] bg-[#fafafa] pt-[11px] pb-1 pl-[3px]">
            <div className="h-full w-2 rounded-full bg-[#c1c1c1]"></div>
          </div>
        </div>
      </div>

      {/* Line of the document lying under the window */}
      <div className="absolute bottom-0 left-[123px] h-[4px] overflow-hidden font-['Liberation_Sans',Arial,sans-serif] text-sm leading-[14px] whitespace-nowrap text-black">
        Following step 2, it sounds like there will be an eventual step 3 to run another round of deletes of pages that have the same that you would like to remove in the report from step 2
      </div>
    </div>
  );
};

export default App;
